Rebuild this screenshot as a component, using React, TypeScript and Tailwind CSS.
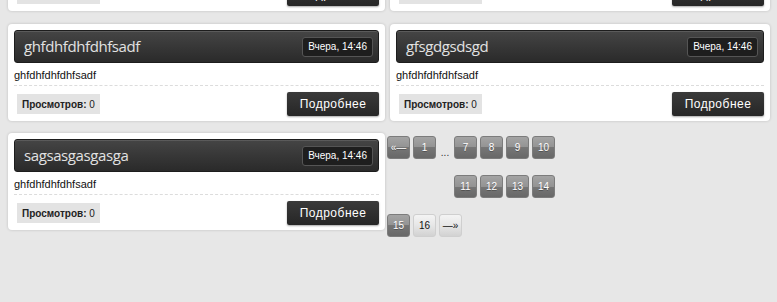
const sans = "font-['Liberation_Sans',Arial,sans-serif]";

type Post = { title: string; text: string; wide?: boolean };

const rows: Post[][] = [
  [
    { title: "ghfdhfdhfdhfsadf", text: "ghfdhfdhfdhfsadf" },
    { title: "gfsgdgsdsgd", text: "ghfdhfdhfdhfsadf", wide: true },
  ],
  [
    { title: "ghfdhfdhfdhfsadf", text: "ghfdhfdhfdhfsadf" },
    { title: "gfsgdgsdsgd", text: "ghfdhfdhfdhfsadf", wide: true },
  ],
];

const PostCard = ({ post }: { post: Post }) => (
  <div
    className={`${post.wide ? "w-[380px]" : "w-[377px]"} h-[97px] shrink-0 rounded-[4px] bg-white px-[6px] pt-[6px] pb-[5px] shadow-[0_0_3px_rgba(0,0,0,0.18)]`}
  >
    <div className="flex h-[33px] items-center justify-between rounded-[3px] border border-[#1d1d1d] bg-gradient-to-b from-[#454545] to-[#2a2a2a] pl-[9px] pr-[5px] shadow-[inset_0_1px_0_rgba(255,255,255,0.12)]">
      <span className="font-['Open_Sans',sans-serif] text-[15px] tracking-[-0.4px] text-[#e2e2e2]">{post.title}</span>
      <span
        className={`${sans} flex h-[20px] items-center rounded-[3px] border border-[#555] bg-[#1e1e1e] px-[5px] text-[10px] text-white`}
      >
        Вчера, 14:46
      </span>
    </div>
    <div
      className={`${sans} h-[23px] border-b border-dashed border-[#dcdcdc] pt-[5px] text-[11px] leading-[14px] text-[#111]`}
    >
      {post.text}
    </div>
    <div className="mt-[6px] flex h-[24px] items-center justify-between">
      <span
        className={`${sans} ml-[3px] flex h-[20px] items-center bg-[#e3e3e3] px-[5px] text-[10px] text-[#222]`}
      >
        <b>Просмотров:</b>&nbsp;0
      </span>
      <button
        className={`${sans} flex h-[24px] w-[92px] items-center justify-center rounded-[2px] bg-gradient-to-b from-[#3a3a3a] to-[#262626] text-[12px] tracking-[0.5px] text-white shadow-[0_1px_2px_rgba(0,0,0,0.35)]`}
      >
        Подробнее
      </button>
    </div>
  </div>
);

const PageBtn = ({ label, light }: { label: string; light?: boolean }) => (
  <span
    className={`${sans} flex h-[23px] w-[23px] items-center justify-center rounded-[3px] border text-[10px] ${
      light
        ? "border-[#cfcfcf] bg-gradient-to-b from-[#f4f4f4] via-[#e6e6e6] to-[#d2d2d2] text-[#111]"
        : "border-[#7c7c7c] bg-[linear-gradient(#a4a4a4,#939393_50%,#767676_50%,#686868)] text-white [text-shadow:0_1px_0_rgba(0,0,0,0.3)]"
    }`}
  >
    {label}
  </span>
);

export default function App() {
  return (
    <div className="h-[302px] overflow-hidden bg-[#e7e7e7]">
      <div className="-mt-[86px] flex flex-col gap-[12px] pl-[8px]">
        {rows.map((row, i) => (
          <div key={i} className={`flex gap-[5px] ${i === 0 ? "mb-[1px]" : ""}`}>
            {row.map((p, j) => (
              <PostCard key={j} post={p} />
            ))}
          </div>
        ))}
        <div className="flex items-start gap-[2px]">
          <PostCard post={{ title: "sagsasgasgasga", text: "ghfdhfdhfdhfsadf" }} />
          <div className="mt-[3px] flex flex-col gap-[16px]">
            <div className="flex gap-[3px]">
              <PageBtn label="«—" />
              <PageBtn label="1" />
              <span className={`${sans} flex w-[12px] items-end justify-center text-[10px] leading-[12px] text-[#333]`}>
                ...
              </span>
              <PageBtn label="7" />
              <PageBtn label="8" />
              <PageBtn label="9" />
              <PageBtn label="10" />
            </div>
            <div className="flex gap-[3px] pl-[67px]">
              <PageBtn label="11" />
              <PageBtn label="12" />
              <PageBtn label="13" />
              <PageBtn label="14" />
            </div>
            <div className="flex gap-[3px]">
              <PageBtn label="15" />
              <PageBtn label="16" light />
              <PageBtn label="—»" light />
            </div>
          </div>
        </div>
      </div>
    </div>
  );
}
